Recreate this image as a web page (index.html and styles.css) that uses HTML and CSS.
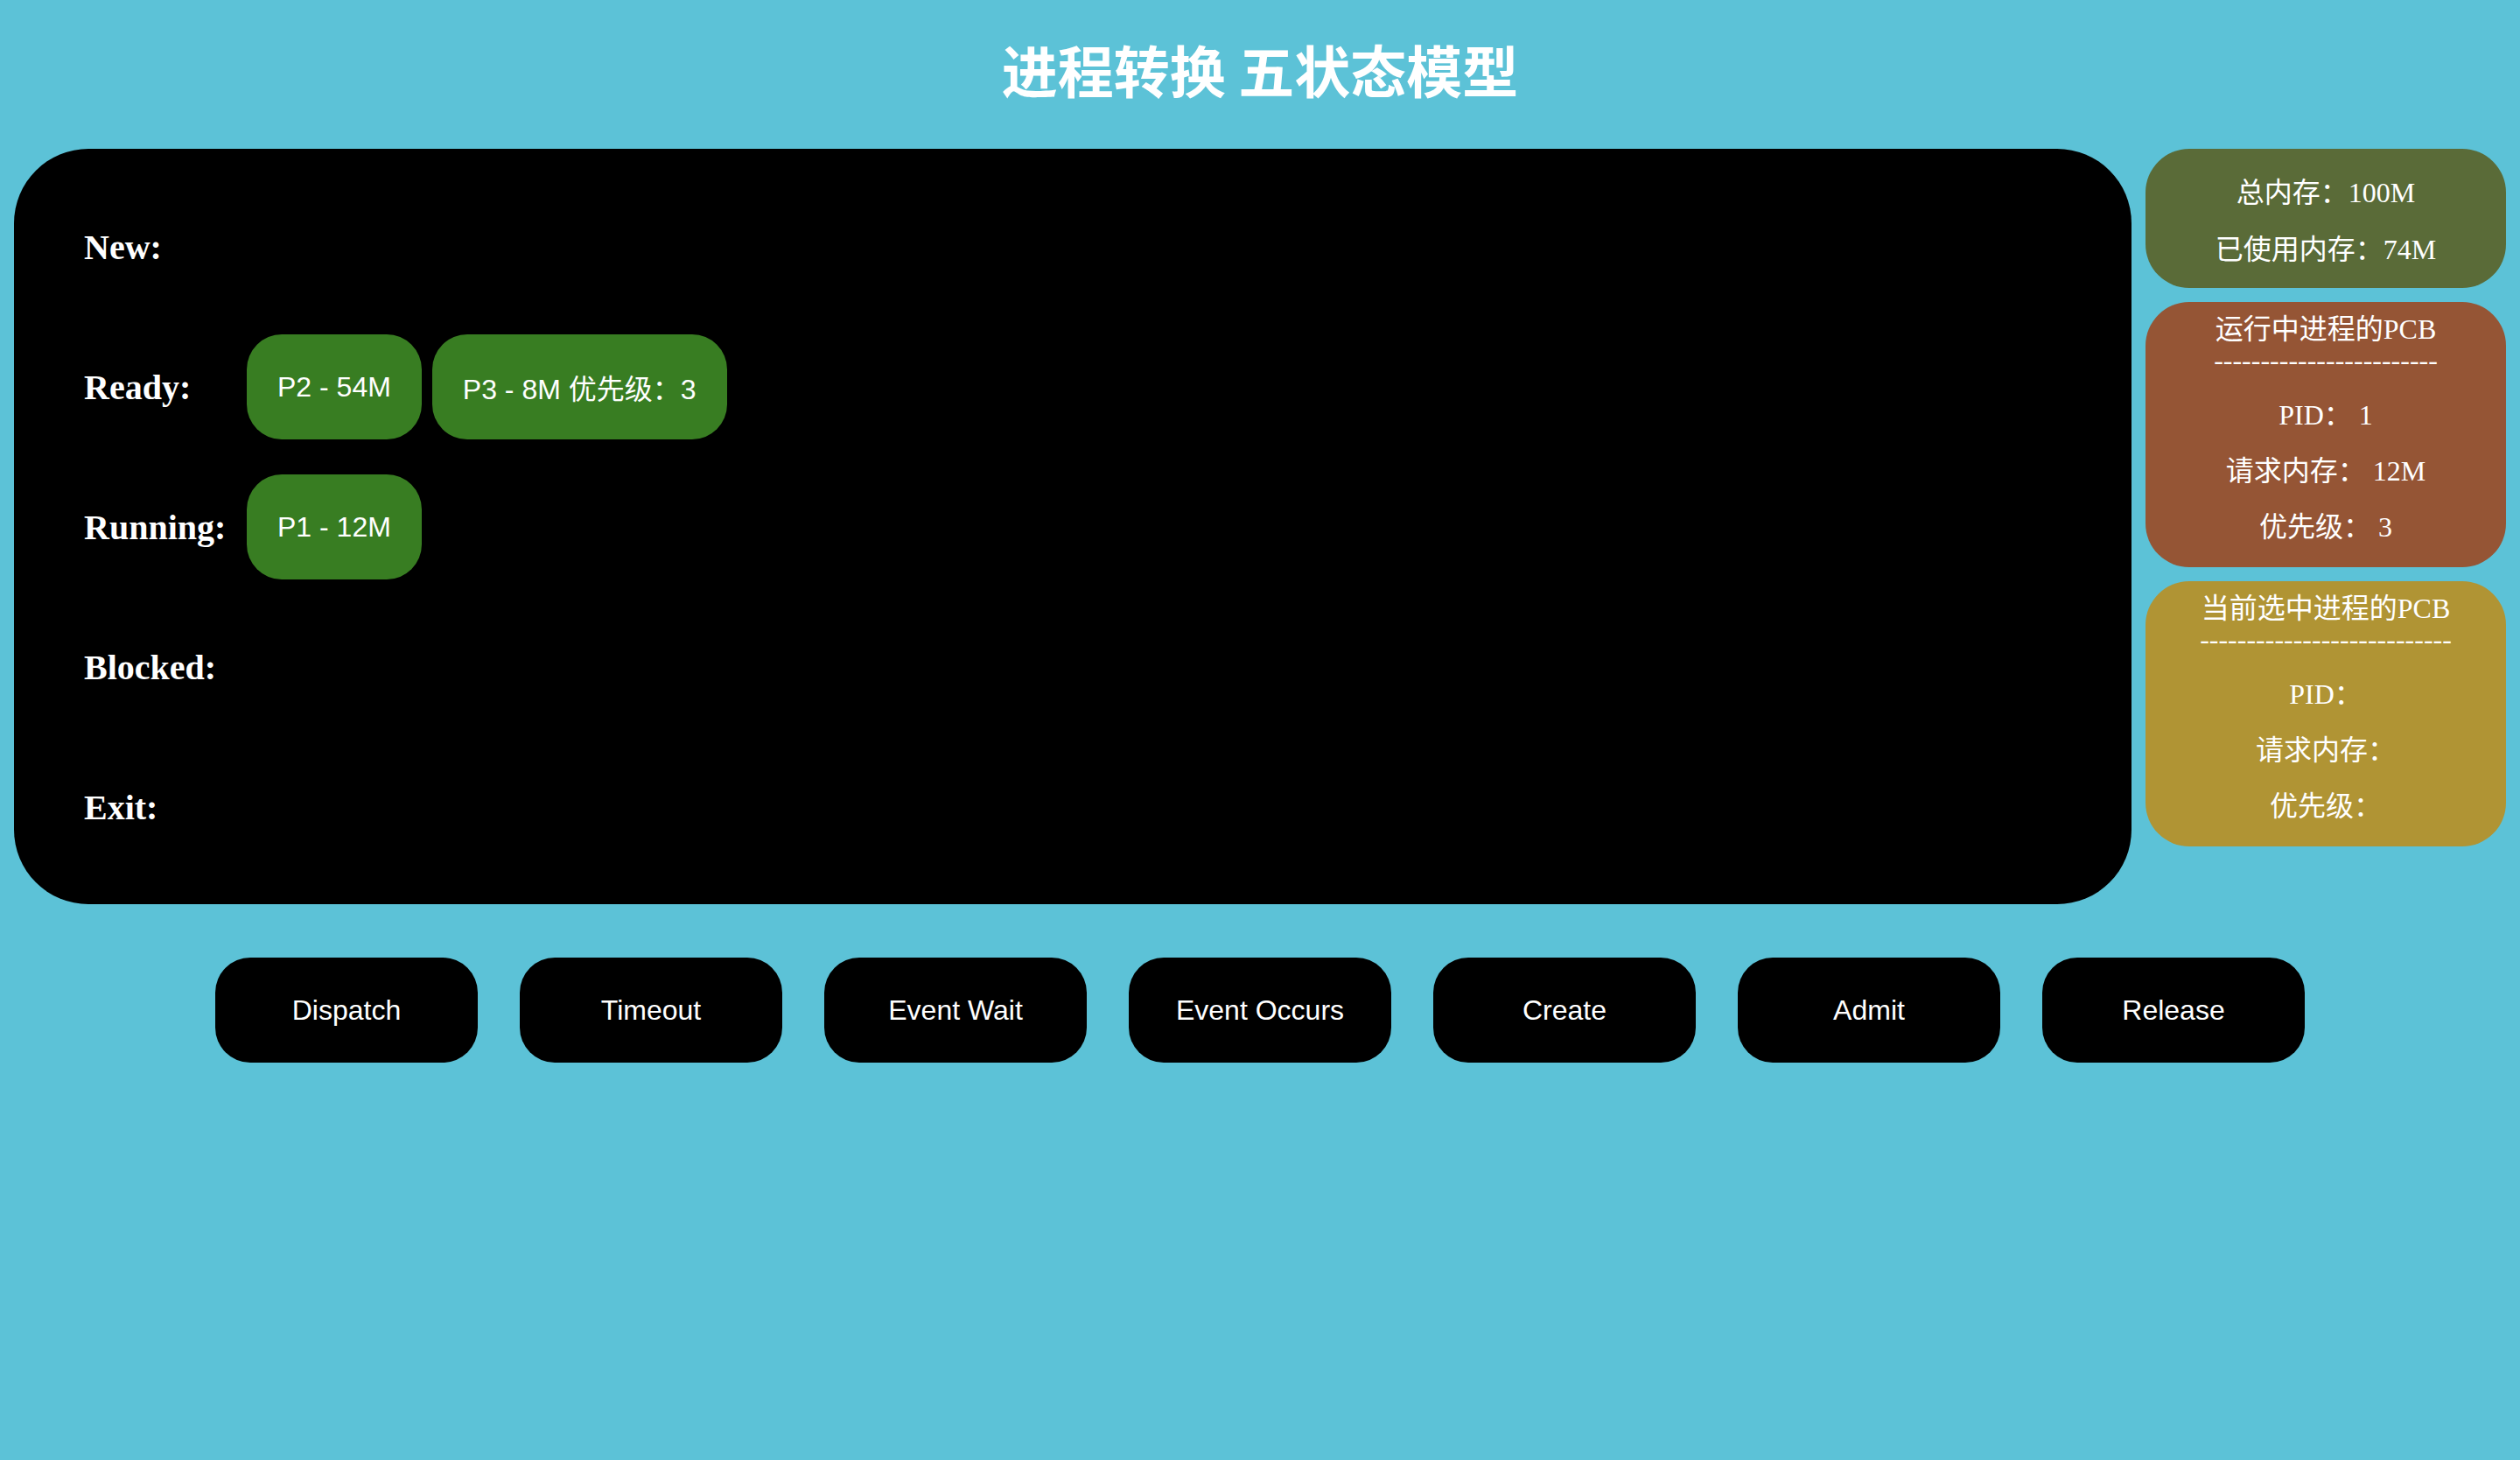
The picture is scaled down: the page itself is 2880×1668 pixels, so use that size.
FILE: index.html
```html
<!DOCTYPE html>
<html lang="zh-CN">
<head>
<meta charset="utf-8">
<title>进程转换 五状态模型</title>
<link rel="stylesheet" href="styles.css">
</head>
<body>
<header class="title">进程转换 五状态模型</header>
<div class="layout">
  <section class="board">
    <div class="row"><div class="label">New:</div><div class="procs"></div></div>
    <div class="row"><div class="label">Ready:</div><div class="procs"><div class="chip">P2 - 54M</div><div class="chip">P3 - 8M 优先级：3</div></div></div>
    <div class="row"><div class="label">Running:</div><div class="procs"><div class="chip">P1 - 12M</div></div></div>
    <div class="row"><div class="label">Blocked:</div><div class="procs"></div></div>
    <div class="row"><div class="label">Exit:</div><div class="procs"></div></div>
  </section>
  <aside class="side">
    <div class="card card-mem">
      <div class="line">总内存：100M</div>
      <div class="line">已使用内存：74M</div>
    </div>
    <div class="card card-pcb card-run">
      <div class="card-head">运行中进程的PCB<br>------------------------</div>
      <div class="line">PID： 1</div>
      <div class="line">请求内存： 12M</div>
      <div class="line">优先级： 3</div>
    </div>
    <div class="card card-pcb card-sel">
      <div class="card-head">当前选中进程的PCB<br>---------------------------</div>
      <div class="line">PID：</div>
      <div class="line">请求内存：</div>
      <div class="line">优先级：</div>
    </div>
  </aside>
</div>
<div class="actions">
  <button class="btn">Dispatch</button>
  <button class="btn">Timeout</button>
  <button class="btn">Event Wait</button>
  <button class="btn">Event Occurs</button>
  <button class="btn">Create</button>
  <button class="btn">Admit</button>
  <button class="btn">Release</button>
</div>
</body>
</html>
```
FILE: styles.css
```css
html, body {
  margin: 0;
  padding: 0;
}
body {
  background: #5cc2d7;
  font-family: "Liberation Sans", "Noto Sans CJK SC", sans-serif;
  color: #fff;
  min-height: 1668px;
}
.title {
  height: 170px;
  box-sizing: border-box;
  padding-bottom: 14px;
  display: flex;
  align-items: center;
  justify-content: center;
  font-family: "Noto Sans CJK SC", sans-serif;
  font-weight: 700;
  font-size: 64px;
  color: #fff;
}
.layout {
  display: flex;
  align-items: flex-start;
  gap: 16px;
  padding: 0 16px;
}
.board {
  flex: 1;
  background: #000;
  border-radius: 85px;
  padding: 52px 80px 51px;
  display: flex;
  flex-direction: column;
  gap: 40px;
}
.row {
  height: 120px;
  display: flex;
  align-items: center;
}
.label {
  width: 186px;
  flex: none;
  font-family: "Liberation Serif", serif;
  font-weight: 700;
  font-size: 40px;
  color: #fff;
}
.procs {
  display: flex;
  gap: 12px;
  height: 120px;
}
.chip {
  height: 120px;
  padding: 0 35px;
  display: flex;
  align-items: center;
  background: #387d22;
  border-radius: 40px;
  font-family: "Liberation Sans", "Noto Sans CJK SC", sans-serif;
  font-size: 32px;
  color: #fff;
  white-space: nowrap;
}
.side {
  width: 412px;
  flex: none;
  display: flex;
  flex-direction: column;
  gap: 16px;
}
.card {
  border-radius: 50px;
  text-align: center;
  font-family: "Liberation Serif", "Noto Sans CJK SC", serif;
  font-size: 32px;
  color: #fff;
}
.card-mem {
  background: #5a6b38;
  padding: 18px 0 11px;
}
.card-run {
  background: #955535;
}
.card-sel {
  background: #b09434;
}
.card-pcb {
  padding: 14px 0 14px;
}
.card-head {
  line-height: 35px;
  margin-bottom: 13px;
}
.card-mem .line {
  line-height: 65px;
}
.card-pcb .line {
  line-height: 64px;
}
.actions {
  margin-top: 61px;
  display: flex;
  justify-content: center;
  gap: 48px;
}
.btn {
  width: 300px;
  height: 120px;
  border: none;
  border-radius: 40px;
  background: #000;
  color: #fff;
  font-family: "Liberation Sans", sans-serif;
  font-size: 32px;
  padding: 0;
}
```
